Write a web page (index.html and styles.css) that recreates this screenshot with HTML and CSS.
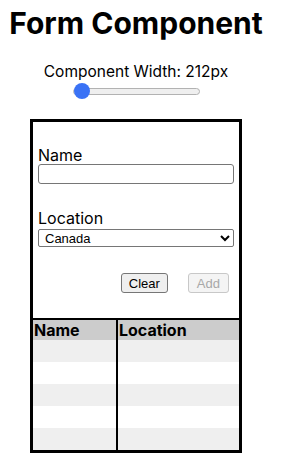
FILE: index.html
```html
<!DOCTYPE html>
<html lang="en">
<head>
    <meta charset="UTF-8">
    <meta name="viewport" content="width=device-width, initial-scale=1.0">
    <title>Form Component</title>
    <link rel="stylesheet" href="styles.css">
</head>
<body>

<div class="page">
    <h1>Form Component</h1>

    <div class="width-control">
        <label for="widthRange">Component Width: 212px</label>
        <input type="range" id="widthRange" class="slider" min="200" max="600" value="200">
    </div>

    <div class="component">
        <form class="entry-form">
            <label class="field-label" for="name">Name</label>
            <input type="text" id="name" class="text-input">

            <label class="field-label location-label" for="location">Location</label>
            <select id="location" class="select-input">
                <option>Canada</option>
                <option>China</option>
                <option>Mexico</option>
                <option>USA</option>
            </select>

            <div class="actions">
                <button type="button" class="btn">Clear</button>
                <button type="button" class="btn" disabled>Add</button>
            </div>
        </form>

        <table class="entries">
            <thead>
                <tr><th class="col-name">Name</th><th>Location</th></tr>
            </thead>
            <tbody>
                <tr><td class="col-name"></td><td></td></tr>
                <tr><td class="col-name"></td><td></td></tr>
                <tr><td class="col-name"></td><td></td></tr>
                <tr><td class="col-name"></td><td></td></tr>
                <tr><td class="col-name"></td><td></td></tr>
            </tbody>
        </table>
    </div>
</div>

</body>
</html>
```

FILE: styles.css
```css
body {
    margin: 8px;
    font-family: Inter, "Noto Sans", sans-serif;
    color: #000;
    background: #fff;
}
.page {
    width: 256px;
}
h1 {
    margin: 0;
    font-size: 30px;
    line-height: 31px;
    font-weight: 700;
    text-align: center;
}
.width-control {
    margin-top: 23px;
    text-align: center;
    font-size: 15.5px;
}
.width-control label {
    display: block;
    line-height: 19px;
}
.slider {
    -webkit-appearance: none;
    appearance: none;
    display: block;
    width: 127px;
    height: 16px;
    margin: 2px auto 0;
    background: transparent;
}
.slider::-webkit-slider-runnable-track {
    height: 7px;
    background: #efefef;
    border: 1px solid #b2b2b2;
    border-radius: 4px;
    box-sizing: border-box;
}
.slider::-webkit-slider-thumb {
    -webkit-appearance: none;
    width: 16px;
    height: 16px;
    margin-top: -5.5px;
    border-radius: 50%;
    background: #3a72f5;
    border: none;
}
.component {
    width: 212px;
    margin: 20px auto 0;
    border: 3px solid #000;
    box-sizing: border-box;
}
.entry-form {
    padding: 25px 5px;
    border-bottom: 2px solid #000;
}
.field-label {
    display: block;
    font-size: 16px;
    line-height: 17px;
}
.location-label {
    margin-top: 26px;
}
.text-input {
    display: block;
    width: 100%;
    height: 20px;
    margin: 0;
    box-sizing: border-box;
    border: 1px solid #767676;
    border-radius: 3px;
    font-size: 13px;
}
.select-input {
    display: block;
    width: 100%;
    height: 18px;
    margin: 2px 0 0;
    padding: 0 2px;
    box-sizing: border-box;
    border: 1px solid #767676;
    border-radius: 2px;
    background: #fff;
    font-family: "Liberation Sans", Arial, sans-serif;
    font-size: 13px;
    color: #000;
}
.actions {
    display: flex;
    justify-content: flex-end;
    gap: 20px;
    margin-top: 26px;
    padding-right: 5px;
}
.btn {
    height: 20px;
    padding: 0 7px;
    background: #efefef;
    border: 1px solid #767676;
    border-radius: 3px;
    font-family: "Liberation Sans", Arial, sans-serif;
    font-size: 13px;
    color: #000;
}
.btn:disabled {
    padding: 0 8px;
    background: #f4f4f4;
    border-color: #c8c8c8;
    color: #a8a8a8;
}
.entries {
    width: 100%;
    border-collapse: collapse;
    border-spacing: 0;
}
.entries th {
    height: 20px;
    padding: 0 1px;
    background: #ccc;
    font-size: 16px;
    line-height: 20px;
    text-align: left;
}
.entries td {
    height: 22px;
    padding: 0;
}
.entries tbody tr:nth-child(odd) td {
    background: #efefef;
}
.entries .col-name {
    border-right: 2px solid #000;
}
```
